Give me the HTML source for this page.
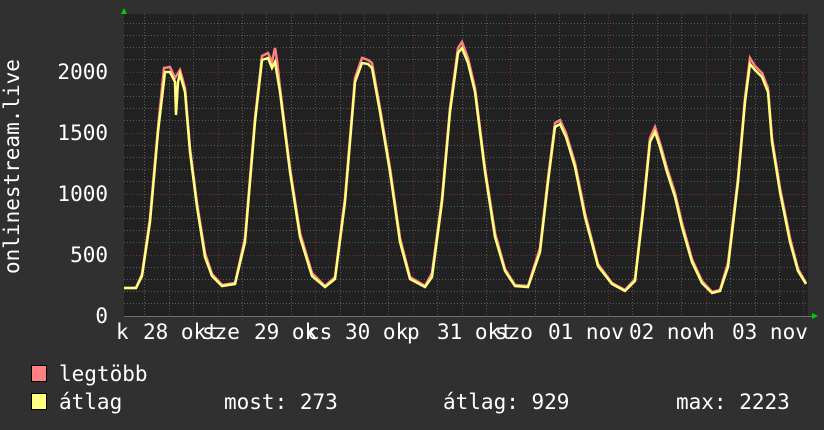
<!DOCTYPE html>
<html><head><meta charset="utf-8"><style>
html,body{margin:0;padding:0;background:#303030;}
svg{display:block}
text{font-family:"DejaVu Sans Mono","Liberation Mono",monospace;fill:#fff;font-size:21px;}
</style></head><body>
<svg width="824" height="430" viewBox="0 0 824 430" xmlns="http://www.w3.org/2000/svg">
<rect x="0" y="0" width="824" height="430" fill="#303030"/>
<rect x="124" y="14" width="684" height="302" fill="#212121"/>
<g stroke="#5a5a5a" stroke-width="1" stroke-dasharray="1,2">
<path d="M124 23.5H808M124 35.5H808M124 47.5H808M124 59.5H808M124 84.5H808M124 96.5H808M124 108.5H808M124 120.5H808M124 145.5H808M124 157.5H808M124 169.5H808M124 181.5H808M124 206.5H808M124 218.5H808M124 230.5H808M124 242.5H808M124 267.5H808M124 279.5H808M124 291.5H808M124 303.5H808"/>
<path d="M144.5 14V316M169.5 14V316M193.5 14V316M242.5 14V316M266.5 14V316M291.5 14V316M340.5 14V316M364.5 14V316M388.5 14V316M437.5 14V316M462.5 14V316M486.5 14V316M535.5 14V316M559.5 14V316M584.5 14V316M632.5 14V316M657.5 14V316M681.5 14V316M730.5 14V316M755.5 14V316M779.5 14V316"/>
</g>
<g stroke="#7a3030" stroke-width="1" stroke-dasharray="1,2">
<path d="M124 72.5H808M124 133.5H808M124 194.5H808M124 255.5H808"/>
<path d="M218.5 14V316M315.5 14V316M413.5 14V316M510.5 14V316M608.5 14V316M706.5 14V316M803.5 14V316"/>
</g>
<path d="M124 316.5H812" stroke="#fff" stroke-width="1" opacity="0.3"/>
<polygon points="121,14 127,14 124,8" fill="#00cc00"/>
<polygon points="812,313 812,319 818,316" fill="#00cc00"/>
<polyline fill="none" stroke="#ff8080" stroke-width="2.5" points="124,288 136,288 142,274 150,218 158,128 164,68 170,67 175,78 180,70 185,88 190,148 197,203 205,253 212,274 222,285 235,283 245,238 255,118 262,56 268,53 272,62 275,48 277,60 280,88 290,168 300,233 312,273 325,286 335,277 345,198 355,78 362,58 368,60 372,63 380,108 390,168 400,238 410,277 425,286 432,273 442,198 450,108 458,48 462,42 468,58 475,88 485,168 495,233 505,269 515,285 528,286 540,248 548,178 555,123 560,120 566,133 575,163 585,213 598,264 612,283 625,290 635,279 643,208 650,138 655,127 660,143 667,168 675,193 682,223 692,259 702,281 712,292 720,290 728,263 738,178 745,98 750,58 755,66 762,73 768,88 772,138 780,188 790,238 798,269 806,283"/>
<polyline fill="none" stroke="#ffff80" stroke-width="2.5" points="124,288 136,288 142,276 150,222 158,132 165,72 170,72 175,82 176,115 178,82 180,74 185,92 190,152 197,207 205,257 212,276 222,286 235,284 245,242 255,122 262,60 268,58 272,68 275,62 280,92 290,172 300,237 312,276 325,287 335,279 345,202 355,82 362,63 368,64 372,68 380,112 390,172 400,242 410,279 425,287 432,277 442,202 450,112 458,53 462,48 468,63 475,92 485,172 495,237 505,271 515,286 528,287 540,252 548,182 555,127 560,124 566,137 575,167 585,217 598,266 612,284 625,291 635,281 643,212 650,142 655,132 660,147 667,172 675,197 682,227 692,262 702,283 712,293 720,291 728,267 738,182 745,102 750,64 755,70 762,77 768,92 772,142 780,192 790,242 798,271 806,284"/>
<g text-anchor="end">
<text x="108" y="79">2000</text>
<text x="108" y="140">1500</text>
<text x="108" y="201">1000</text>
<text x="108" y="262">500</text>
<text x="108" y="323">0</text>
</g>
<text transform="translate(19,274) rotate(-90)">onlinestream.live</text>
<text x="116" y="339">k</text>
<text x="143" y="339">28 okt</text>
<text x="202" y="339">sze</text>
<text x="254" y="339">29 ok</text>
<text x="307" y="339">cs</text>
<text x="345" y="339">30 ok</text>
<text x="407" y="339">p</text>
<text x="437" y="339">31 okt</text>
<text x="495" y="339">szo</text>
<text x="548" y="339">01 nov</text>
<text x="629" y="339">02 nov</text>
<text x="702" y="339">h</text>
<text x="732" y="339">03 nov</text>
<rect x="31.5" y="365.5" width="15" height="16" fill="#ff8080" stroke="#000"/>
<rect x="31.5" y="393.5" width="15" height="16" fill="#ffff80" stroke="#000"/>
<text x="59" y="381">legtöbb</text>
<text x="59" y="409">átlag</text>
<text x="224" y="409">most: 273</text>
<text x="443" y="409">átlag: 929</text>
<text x="676" y="409">max: 2223</text>
</svg>
</body></html>
